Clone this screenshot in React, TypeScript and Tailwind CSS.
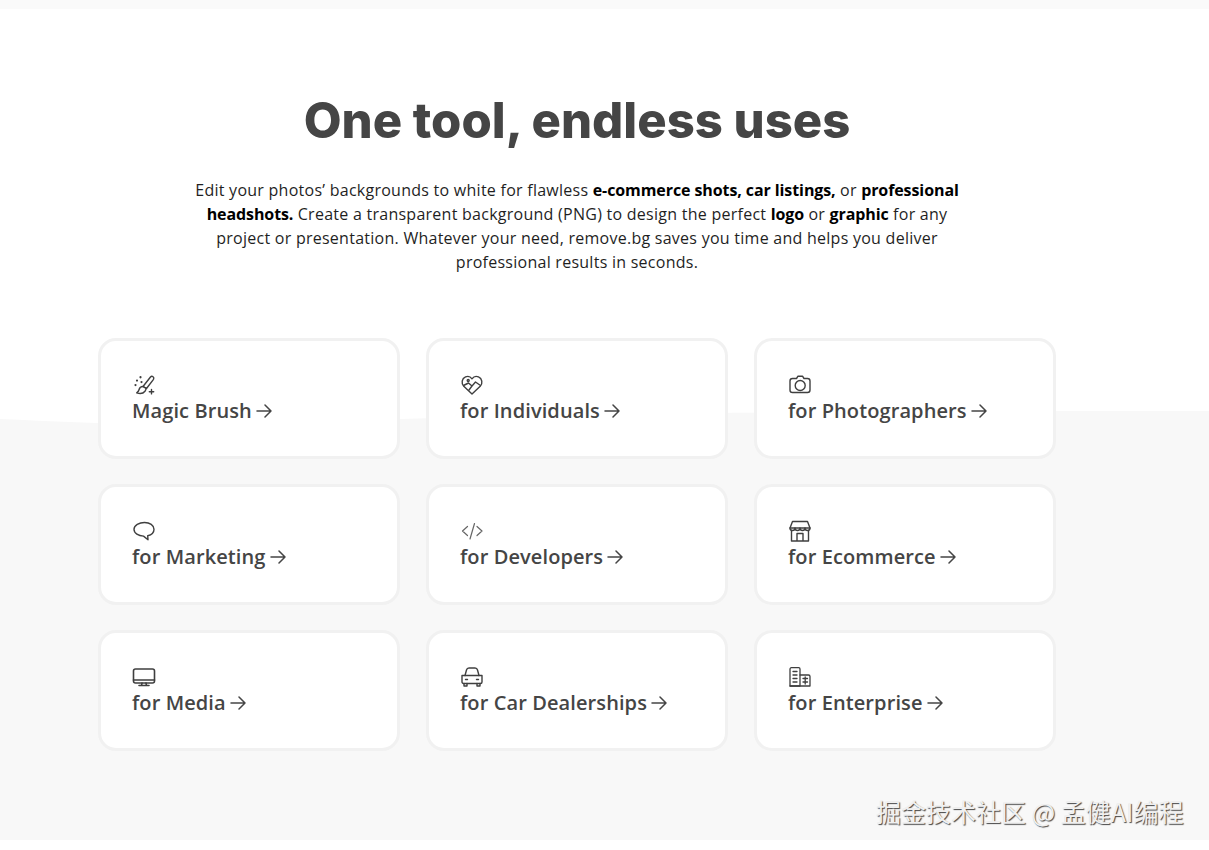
import React from 'react';

const iconProps = {
  className: 'w-6 h-6 -my-0.5',
  viewBox: '0 0 24 24',
  fill: 'none',
  stroke: '#3f3f3f',
  strokeWidth: 1.4,
  strokeLinecap: 'round' as const,
  strokeLinejoin: 'round' as const,
};

const BrushIcon = () => (
  <svg {...iconProps}>
    <path d="M11 13.500 18.500 4a1.900 1.900 0 0 1 3 2.300L14.500 15.500z" />
    <path d="M11 13.500c-2.200 0-3.500 1.300-3.900 3-.3 1.400-1 2.400-2.400 3.300 3 1 6.600.5 8.300-1.600.9-1.100 1.100-2.200.9-3z" />
    <path d="M8.500 4.200v.1M5 7.500v.1M9.500 9v.1M3.500 12v.1" strokeWidth={2.2} />
    <path d="M19.500 16.500v4.400M17.300 18.700h4.400" />
  </svg>
);

const HeartIcon = () => (
  <svg {...iconProps}>
    <path d="M12 21 3.800 13.200C1 10.400 1.800 5.400 5.500 3.900c2.500-1 5 -.2 6.500 1.900 1.500-2.100 4-2.900 6.500-1.900 3.700 1.500 4.500 6.500 1.700 9.300z" />
    <path d="M3.500 12.500 8.500 10l3.500 3 3.500-4 5 3.500M12 13l-3 4" />
    <circle cx="8.200" cy="7.500" r="1" />
  </svg>
);

const CameraIcon = () => (
  <svg {...iconProps}>
    <path d="M8.500 5.500 10 3.200h4.500l1.500 2.300h3.500c1.400 0 2.500 1.100 2.500 2.500v9c0 1.400-1.100 2.500-2.500 2.500h-15C3.100 19.500 2 18.400 2 17V8c0-1.400 1.100-2.500 2.500-2.500z" />
    <circle cx="12.200" cy="12.500" r="5" />
  </svg>
);

const ChatIcon = () => (
  <svg {...iconProps}>
    <path d="M12.500 3.500c5.300 0 9.500 2.900 9.500 6.800 0 3.300-2.700 5.700-6.300 6.500l.3 4-4.500-3.700C6.500 17 2 14.300 2 10.300 2 6.400 7.200 3.500 12.500 3.500z" />
  </svg>
);

const CodeIcon = () => (
  <svg {...iconProps} strokeWidth={1.2} stroke="#666666">
    <path d="M7.500 7.500 2.500 12l5 4.500M17 7.500 22 12l-5 4.500M14.500 4.500 10 20" />
  </svg>
);

const StoreIcon = () => (
  <svg {...iconProps}>
    <path d="M4.500 2.500h15l2.500 6.500c0 1.500-1.200 2.500-2.500 2.500S17 10.500 17 9c0 1.500-1.200 2.500-2.500 2.500S12 10.500 12 9c0 1.500-1.200 2.500-2.500 2.500S7 10.500 7 9c0 1.500-1.200 2.500-2.500 2.500S2 10.500 2 9z" />
    <path d="M2 9h20M3.500 11.500V22h17V11.500M9 22v-7.500h6V22" />
  </svg>
);

const MonitorIcon = () => (
  <svg {...iconProps} strokeWidth={1.6}>
    <rect x="1.500" y="4" width="21" height="14" rx="2" />
    <path d="M1.500 15h21M10 18l-.5 2.500M14 18l.5 2.500M7 20.500h10" />
  </svg>
);

const CarIcon = () => (
  <svg {...iconProps}>
    <path d="M5 10.500 6.500 5c.3-1.200 1.300-2 2.500-2h6c1.200 0 2.200.8 2.500 2l1.500 5.500" />
    <path d="M2 10.500h20v6.500c0 .8-.7 1.500-1.500 1.500h-17C2.700 18.500 2 17.800 2 17z" />
    <path d="M4 18.500V21h3v-2.500M17 18.500V21h3v-2.500M5.500 14.500h2M16.500 14.500h2" />
  </svg>
);

const BuildingsIcon = () => (
  <svg {...iconProps} strokeWidth={1.3}>
    <path d="M2 21V4c0-.7.600-1.300 1.300-1.300h7.400c.7 0 1.300.6 1.300 1.300v17z" />
    <path d="M12 10h8.500c.8 0 1.500.7 1.500 1.500V21H2" />
    <path d="M5 6.500h4M5 10h4M5 13.500h4M5 17h4M15 13.500h4.500M15 17h4.500M17.200 12v7" />
  </svg>
);

const Arrow = () => (
  <svg className="w-4 h-[14px]" viewBox="0 0 16 14" fill="none" stroke="#454545" strokeWidth={1.5} strokeLinecap="round" strokeLinejoin="round">
    <path d="M1 7h14M9 1l6 6-6 6" />
  </svg>
);

const Strong = ({ children }: { children: React.ReactNode }) => (
  <b className="font-bold tracking-[-0.09px] text-black">{children}</b>
);

const items = [
  { label: 'Magic Brush', icon: <BrushIcon /> },
  { label: 'for Individuals', icon: <HeartIcon /> },
  { label: 'for Photographers', icon: <CameraIcon /> },
  { label: 'for Marketing', icon: <ChatIcon /> },
  { label: 'for Developers', icon: <CodeIcon /> },
  { label: 'for Ecommerce', icon: <StoreIcon /> },
  { label: 'for Media', icon: <MonitorIcon /> },
  { label: 'for Car Dealerships', icon: <CarIcon /> },
  { label: 'for Enterprise', icon: <BuildingsIcon /> },
];

export default function App() {
  return (
    <div className="relative h-[850px] overflow-hidden bg-white font-['Open_Sans',sans-serif]">
      {/* Wave background */}
      <svg className="absolute left-0 top-[408px] w-full h-[432px]" viewBox="0 0 1209 432" preserveAspectRatio="none">
        <path d="M0 11C50 13 100 16 160 16 300 16 420 8 700 5 900 3 1050 3 1209 3V432H0Z" fill="#f8f8f8" />
      </svg>

      <div className="relative">
        <div className="h-[9px] bg-[#fafafa]" />

        <div className="w-[1154px] pt-[82px]">
          <h1 className="text-center text-[49px] leading-[60px] font-extrabold text-[#454545] font-['Inter',sans-serif]">
            One tool, endless uses
          </h1>

          <p className="mx-auto mt-[27px] w-[780px] text-center text-[16px] leading-[24px] tracking-[0.26px] text-[#1f1f1f]">
            Edit your photos’ backgrounds to white for flawless <Strong>e-commerce shots, car listings,</Strong> or <Strong>professional headshots.</Strong> Create a transparent background (PNG) to design the perfect <Strong>logo</Strong> or <Strong>graphic</Strong> for any project or presentation. Whatever your need, remove.bg saves you time and helps you deliver professional results in seconds.
          </p>

          <div className="mx-auto mt-[64px] grid w-[958px] grid-cols-3 gap-x-[26px] gap-y-[25px]">
            {items.map((item) => (
              <div key={item.label} className="flex h-[121px] flex-col justify-center rounded-[18px] border-[3px] border-[#f1f1f1] bg-white pl-[31px] pt-[4px] text-[#454545]">
                <div className="h-5">{item.icon}</div>
                <div className="mt-[1px] flex items-center gap-[4px] text-[20px] leading-[30px] font-semibold tracking-[0.1px]">
                  {item.label}
                  <Arrow />
                </div>
              </div>
            ))}
          </div>
        </div>
      </div>

      {/* Watermark */}
      <div className="absolute left-[876px] top-[794px] text-[25px] leading-[34px] text-[#f0f0f0] [text-shadow:1px_1px_1px_#444] font-['Noto_Sans_CJK_SC',sans-serif]">
        掘金技术社区 @ 孟健AI编程
      </div>
    </div>
  );
}
